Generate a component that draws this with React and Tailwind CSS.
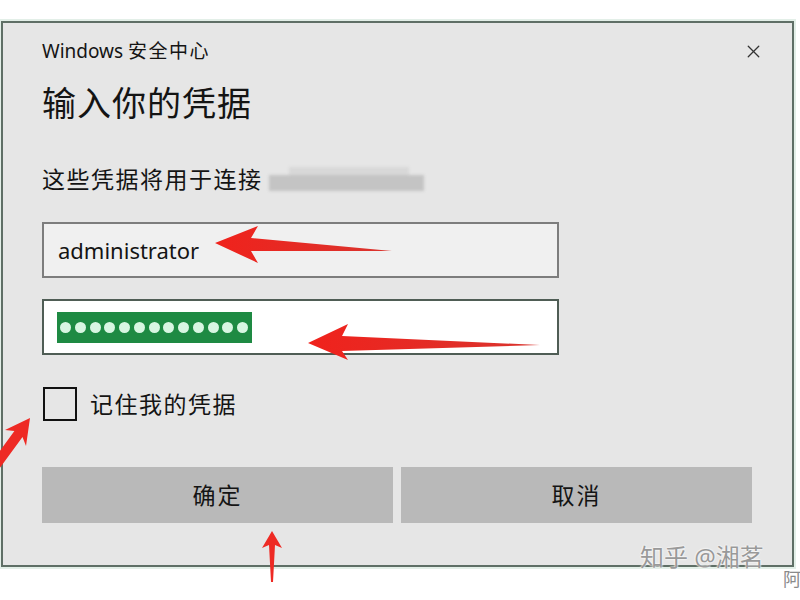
import { X } from 'lucide-react'

const font = { fontFamily: '"Noto Sans", "Noto Sans CJK SC", sans-serif' }

function PasswordDots({ count }) {
  return (
    <div className="flex h-[31px] w-[195px] items-center gap-[3.75px] bg-[#1e8a43] pl-[3px]">
      {Array.from({ length: count }).map((_, i) => (
        <span key={i} className="block h-[11px] w-[11px] rounded-full bg-[#d8f6e2]" />
      ))}
    </div>
  )
}

// red callout arrows drawn on top of the dialog
function Arrows() {
  return (
    <svg className="pointer-events-none absolute inset-0" width="800" height="600" viewBox="0 0 800 600">
      <defs>
        <linearGradient id="red" x1="0" x2="1" y1="0" y2="0">
          <stop offset="0" stopColor="#f0221c" />
          <stop offset="1" stopColor="#d9342e" />
        </linearGradient>
      </defs>
      <polygon fill="url(#red)" points="215,243 258,226 251,238 392,251 251,251 258,263" />
      <polygon fill="url(#red)" points="308,343 348,324 342,336 540,345 342,351 348,360" />
      <polygon fill="#ee2a24" points="30,418 26,446 22.5,437 -1,469 -9,463 14.4,431 5,430" />
      <polygon fill="#ee2a24" points="272,531 282,548 275,545 273,582 271,582 269,545 262,548" />
    </svg>
  )
}

export default function App() {
  return (
    <div className="relative h-[600px] w-[800px] overflow-hidden bg-white pl-[1px] pt-[21px]" style={font}>
      <div className="h-[546px] w-[793px] border-2 border-[#5f6f66] bg-[#e6e6e6] pl-[39px] pr-[28px] pt-[16px] text-[#141414] shadow-[0_0_0_2px_#e3efe8]">
        <div className="flex h-[24px] items-center justify-between">
          <span className="text-[19px] leading-[24px]">
            Windows <span className="tracking-[1.5px]">安全中心</span>
          </span>
          <X className="h-[21px] w-[21px] text-[#333]" strokeWidth={1.5} />
        </div>

        <h1 className="mt-[20px] text-[34px] leading-[40px] tracking-[1px]">输入你的凭据</h1>

        <div className="mt-[42px] flex h-[28px] items-center">
          <span className="text-[23px] leading-[28px] tracking-[1.5px]">这些凭据将用于连接</span>
          <div className="ml-[6px] flex h-[28px] w-[160px] flex-col blur-[1.5px]">
            <div className="ml-[20px] mt-[2px] h-[8px] w-[120px] bg-[#d8d8d8]" />
            <div className="h-[16px] w-[155px] bg-[#c4c4c4]" />
          </div>
        </div>

        <div className="mt-[29px] flex h-[56px] w-[517px] items-center border-2 border-[#7d7d7d] bg-[#f0f0f0] pl-[14px]">
          <span className="text-[22px] leading-[28px]">administrator</span>
        </div>

        <div className="mt-[21px] flex h-[56px] w-[517px] items-center border-2 border-[#4f5d55] bg-white pl-[13px]">
          <PasswordDots count={13} />
        </div>

        <div className="mt-[31px] flex h-[36px] items-center gap-[13px]">
          <span className="ml-[1px] block h-[34px] w-[34px] border-2 border-[#111]" />
          <span className="text-[23px] leading-[28px] tracking-[1.5px]">记住我的凭据</span>
        </div>

        <div className="mt-[45px] flex w-[710px] gap-[8px]">
          <button className="flex h-[56px] w-[351px] items-center justify-center bg-[#b9b9b9] text-[23px] tracking-[2px]">确定</button>
          <button className="flex h-[56px] w-[351px] items-center justify-center bg-[#b9b9b9] text-[23px] tracking-[2px]">取消</button>
        </div>
      </div>

      <Arrows />

      <div className="absolute left-[640px] top-[542px] whitespace-nowrap text-[24px] leading-[30px] text-[#999] [text-shadow:0_0_2px_#fff,0_0_2px_#fff]">
        知乎 @湘茗
      </div>
      <div className="absolute left-[783px] top-[568px] text-[18px] leading-[22px] text-[#8a8a8a] [text-shadow:0_0_2px_#fff]">阿</div>
    </div>
  )
}
